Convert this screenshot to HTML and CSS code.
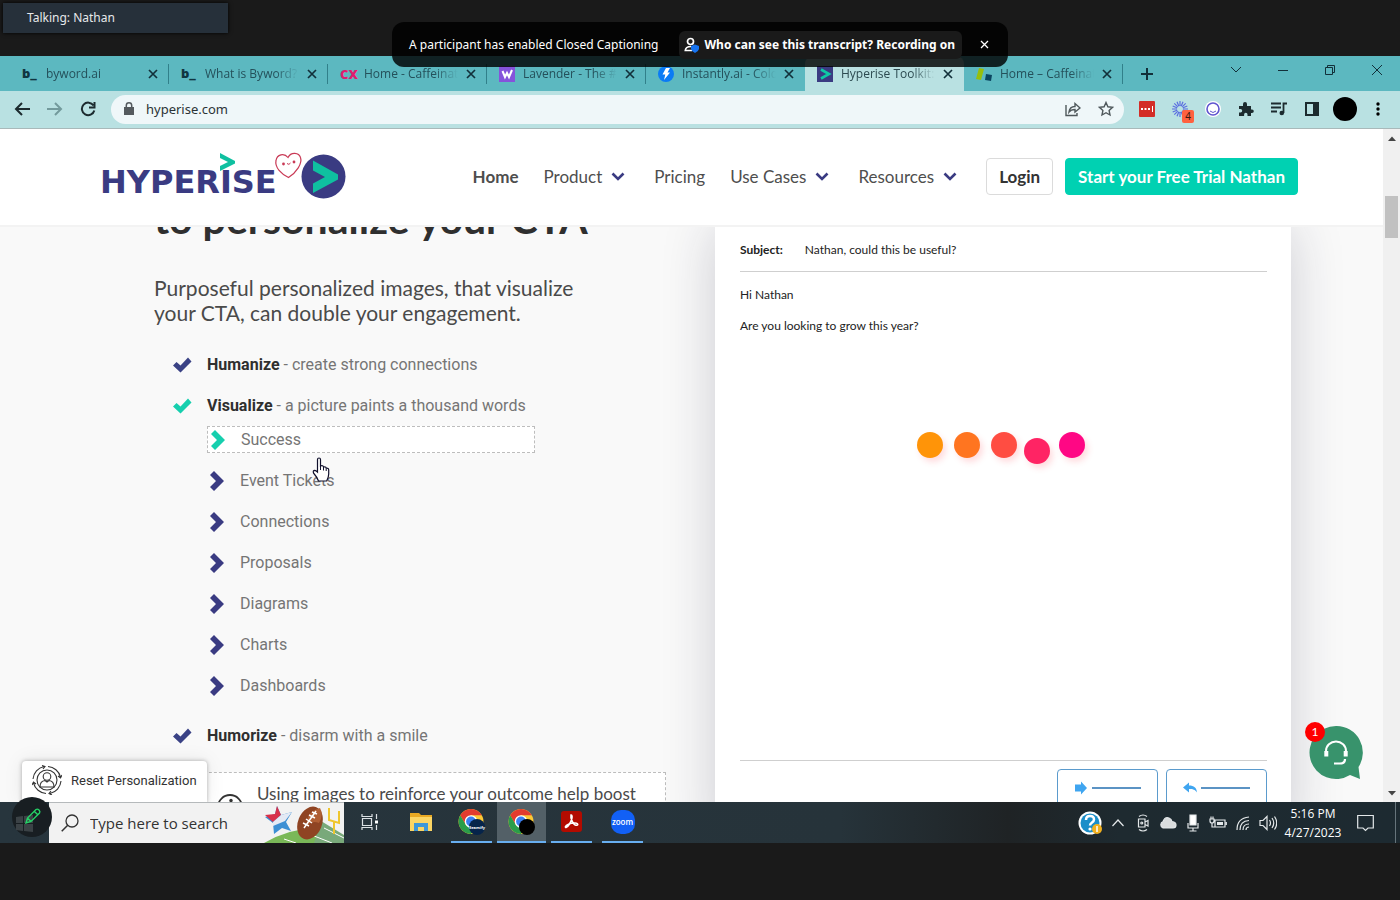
FILE: index.html
```html
<!DOCTYPE html>
<html lang="en">
<head>
  <meta charset="UTF-8">
  <meta name="viewport" content="width=device-width, initial-scale=1.0">
  <title>Hyperise Toolkit</title>
  <link rel="stylesheet" href="styles.css">
</head>
<body>

  <!-- meeting overlay -->
  <div class="meeting-bar">
    <div class="talking">Talking: Nathan</div>
  </div>
  <div class="notice">
    <span>A participant has enabled Closed Captioning</span>
    <button class="notice-link">
      <svg width="16" height="16" viewBox="0 0 16 16"><circle cx="6.500" cy="4.500" r="3" fill="none" stroke="#fff" stroke-width="1.700"/><path d="M7 9.500C3.500 9.500 1.500 11 1.300 13.500H8" fill="none" stroke="#fff" stroke-width="1.700"/><path d="M11 7.500l4 1.500v3q-.6 2.500-4 4-3.400-1.500-4-4V9z" fill="#1673f0"/></svg>
      Who can see this transcript? Recording on
    </button>
    <button class="notice-close" aria-label="Close"><svg width="9" height="9" viewBox="0 0 9 9"><path d="M1 1l7 7M8 1L1 8" stroke="#fff" stroke-width="1.300"/></svg></button>
  </div>

  <div class="browser">
    <div class="tabs">
      <div class="tab"><b class="favicon byword">b_</b><span class="tab-title">byword.ai</span><button class="tab-close" aria-label="Close tab"><svg viewBox="0 0 10 10"><path d="M1 1l8 8M9 1L1 9"/></svg></button></div>
      <div class="tab"><b class="favicon byword">b_</b><span class="tab-title">What is Byword? -</span><button class="tab-close" aria-label="Close tab"><svg viewBox="0 0 10 10"><path d="M1 1l8 8M9 1L1 9"/></svg></button></div>
      <div class="tab"><b class="favicon cx">CX</b><span class="tab-title">Home - Caffeinated</span><button class="tab-close" aria-label="Close tab"><svg viewBox="0 0 10 10"><path d="M1 1l8 8M9 1L1 9"/></svg></button></div>
      <div class="tab"><svg class="favicon" viewBox="0 0 16 16"><path d="M0 0h16v16H0z" fill="#8553db"/><path d="M3.500 5l2.500 6 2-4 2 4 3-7" fill="none" stroke="#fff" stroke-width="2"/></svg><span class="tab-title">Lavender - The #1</span><button class="tab-close" aria-label="Close tab"><svg viewBox="0 0 10 10"><path d="M1 1l8 8M9 1L1 9"/></svg></button></div>
      <div class="tab last"><svg class="favicon" viewBox="0 0 16 16"><circle cx="8" cy="8" r="8" fill="#0a7bf5"/><path d="M8 2h4L9.500 6.500H12L6 14l1.300-5.500H4.500z" fill="#fff"/></svg><span class="tab-title">Instantly.ai - Cold</span><button class="tab-close" aria-label="Close tab"><svg viewBox="0 0 10 10"><path d="M1 1l8 8M9 1L1 9"/></svg></button></div>
      <div class="tab active"><svg class="favicon" viewBox="0 0 16 16"><path d="M0 0h16v16H0z" fill="#3a3b82"/><path d="M4 3.500L12 8l-8 4.500" fill="none" stroke="#0fc9a5" stroke-width="2.600"/></svg><span class="tab-title">Hyperise Toolkit: P</span><button class="tab-close" aria-label="Close tab"><svg viewBox="0 0 10 10"><path d="M1 1l8 8M9 1L1 9"/></svg></button></div>
      <div class="tab"><svg class="favicon" viewBox="0 0 16 16"><path d="M3 2l5 1-3 11-5-1z" fill="#97bf0d"/><path d="M10 8l6 1-1 6-6-1z" fill="#0b4560"/></svg><span class="tab-title">Home – Caffeinated</span><button class="tab-close" aria-label="Close tab"><svg viewBox="0 0 10 10"><path d="M1 1l8 8M9 1L1 9"/></svg></button></div>
      <button class="new-tab" aria-label="New tab"><svg width="14" height="14" viewBox="0 0 14 14"><path d="M7 1v12M1 7h12" stroke="#12303a" stroke-width="2"/></svg></button>
      <div class="window-buttons">
        <button aria-label="Search tabs"><svg viewBox="0 0 12 12"><path d="M1 3l5 5 5-5"/></svg></button>
        <button aria-label="Minimize"><svg viewBox="0 0 12 12"><path d="M1 6.500h10"/></svg></button>
        <button aria-label="Restore"><svg viewBox="0 0 12 12"><path d="M1.500 3.500h7v7h-7zM3.500 3.500v-2h7v7h-2"/></svg></button>
        <button aria-label="Close"><svg viewBox="0 0 12 12"><path d="M1 1l10 10M11 1L1 11"/></svg></button>
      </div>
    </div>

    <div class="toolbar">
      <div class="nav-buttons">
        <button aria-label="Back"><svg viewBox="0 0 16 16"><path d="M16 8H2M8 2L2 8l6 6" stroke="#1c2b2f"/></svg></button>
        <button aria-label="Forward"><svg viewBox="0 0 16 16"><path d="M0 8h14M8 2l6 6-6 6" stroke="#739a9c"/></svg></button>
        <button aria-label="Reload"><svg viewBox="0 0 16 16"><path d="M13.500 4.500A6.300 6.300 0 1 0 14.300 9.500M14.500 1v5.500H9" stroke="#1c2b2f"/></svg></button>
      </div>
      <div class="address">
        <svg width="10" height="14" viewBox="0 0 10 14"><path d="M0 5h10v8H0z" fill="#545a5e"/><path d="M2.300 5.500V3.500a2.700 2.700 0 0 1 5.400 0v2" fill="none" stroke="#545a5e" stroke-width="1.500"/></svg>
        <input type="text" value="hyperise.com" aria-label="Address">
        <button aria-label="Share"><svg width="16" height="16" viewBox="0 0 16 16"><path d="M1 4v10.500h11V12M4 11c.5-4 3-5.500 6-5.500V2.500L15 7l-5 4V8.500c-3 0-4.500.5-6 2.500z"/></svg></button>
        <button aria-label="Bookmark"><svg width="16" height="16" viewBox="0 0 16 16"><path d="M8 1.500l1.900 4.300 4.600.5-3.400 3.100.9 4.600L8 11.700 4 14l.9-4.600L1.500 6.300l4.600-.5z"/></svg></button>
      </div>
      <div class="extensions">
        <svg viewBox="0 0 16 16"><rect width="16" height="16" rx="1" fill="#d32d27"/><path d="M2 8h2M5.500 8h2M9 8h2" stroke="#fff" stroke-width="2"/><path d="M13.500 5v6" stroke="#fff"/></svg>
        <span class="ext-badge"><svg viewBox="0 0 16 16"><path d="M8 0v16M0 8h16M2.300 2.300l11.400 11.400M13.700 2.300L2.300 13.700M5 .7l6 14.600M11 .7L5 15.300M.7 5l14.600 6M15.300 5L.7 11" stroke="#5a6de0" stroke-width="1.200"/><circle cx="8" cy="8" r="3" fill="#b9e1e2"/></svg><span class="badge">4</span></span>
        <svg viewBox="0 0 16 16"><circle cx="8" cy="8" r="8" fill="#fff"/><circle cx="8" cy="8" r="6" fill="none" stroke="#5f55cf" stroke-width="1.600"/><path d="M5 10q3 3 6 0" fill="none" stroke="#5f55cf"/></svg>
        <svg viewBox="0 0 16 16"><path d="M1 5h4V3a2 2 0 0 1 4 0v2h4v3.500h1a1.800 1.800 0 0 1 0 3.600h-1V15H9.500v-1.500a1.700 1.700 0 0 0-3.400 0V15H1v-3.500h1.500a1.700 1.700 0 0 0 0-3.400H1z" fill="#1c2b2f"/></svg>
        <svg viewBox="0 0 16 16"><path d="M0 2.500h10M0 6.500h10M0 10.500h6M12.500 12V2.500H16" fill="none" stroke="#1c2b2f" stroke-width="1.800"/><circle cx="10.800" cy="12" r="2.300" fill="#1c2b2f"/></svg>
        <svg viewBox="0 0 16 16"><path d="M2 2h12v12H2z" fill="none" stroke="#1c2b2f" stroke-width="2"/><path d="M9 2h5v12H9z" fill="#1c2b2f"/></svg>
        <span class="avatar"></span>
        <svg viewBox="0 0 16 16"><circle cx="8" cy="3" r="1.700"/><circle cx="8" cy="8" r="1.700"/><circle cx="8" cy="13" r="1.700"/></svg>
      </div>
    </div>

    <div class="viewport">
      <div class="page">
        <header class="site-header">
          <a class="logo" href="#" aria-label="Hyperise">
            <svg width="246" height="50" viewBox="0 0 246 50">
              <text x="-1" y="42" class="logo-text">HYPERISE</text>
              <path d="M119 2v5l8 4-8 4v5l15-7.500V10z" fill="#0fc0a0"/>
              <path d="M187.500 26.500c-7-3.500-14-10-12.500-17 1-6 8-8 12-3 3-6 11-5 12.500 0 2 6-4 15-12 20z" fill="#fff" stroke="#c93a56" stroke-width="1.200"/>
              <circle cx="182.500" cy="13" r="1.400" fill="#c93a56"/><circle cx="193" cy="11" r="1.400" fill="#c93a56"/><path d="M186 12.500q2 2 3.500-.5" fill="none" stroke="#c93a56"/>
              <circle cx="222.500" cy="25.500" r="22" fill="#3a3b82"/>
              <path d="M212 9.500v10l12 6.500-12 6.500v9.500l25-13.500v-5z" fill="#0fc0a0"/>
            </svg>
          </a>
          <nav class="menu">
            <a class="current" href="#">Home</a>
            <a class="drop" href="#">Product <svg viewBox="0 0 14 9"><path d="M1.500 1.500L7 7l5.500-5.500"/></svg></a>
            <a href="#">Pricing</a>
            <a class="drop" href="#">Use Cases <svg viewBox="0 0 14 9"><path d="M1.500 1.500L7 7l5.500-5.500"/></svg></a>
            <a class="drop" href="#">Resources <svg viewBox="0 0 14 9"><path d="M1.500 1.500L7 7l5.500-5.500"/></svg></a>
          </nav>
          <button class="btn login">Login</button>
          <button class="btn trial">Start your Free Trial Nathan</button>
        </header>

        <main class="hero">
          <section class="pitch">
            <h1>to personalize your CTA</h1>
            <p class="lead">Purposeful personalized images, that visualize<br>your CTA, can double your engagement.</p>
            <ul class="checks">
              <li><svg class="check" viewBox="0 0 20 16"><path d="M1 8.500L4.500 5l4 3.500L16 .5l3.500 4L8.500 15.500z"/></svg><span><b>Humanize</b> - create strong connections</span></li>
              <li class="open"><svg class="check" viewBox="0 0 20 16"><path d="M1 8.500L4.500 5l4 3.500L16 .5l3.500 4L8.500 15.500z"/></svg><span><b>Visualize</b> - a picture paints a thousand words</span></li>
            </ul>
            <ul class="topics">
              <li class="selected"><svg viewBox="0 0 14 20"><path d="M0 4l4-4 10 10L4 20l-4-4 6-6z"/></svg>Success</li>
              <li><svg viewBox="0 0 14 20"><path d="M0 4l4-4 10 10L4 20l-4-4 6-6z"/></svg>Event Tickets</li>
              <li><svg viewBox="0 0 14 20"><path d="M0 4l4-4 10 10L4 20l-4-4 6-6z"/></svg>Connections</li>
              <li><svg viewBox="0 0 14 20"><path d="M0 4l4-4 10 10L4 20l-4-4 6-6z"/></svg>Proposals</li>
              <li><svg viewBox="0 0 14 20"><path d="M0 4l4-4 10 10L4 20l-4-4 6-6z"/></svg>Diagrams</li>
              <li><svg viewBox="0 0 14 20"><path d="M0 4l4-4 10 10L4 20l-4-4 6-6z"/></svg>Charts</li>
              <li><svg viewBox="0 0 14 20"><path d="M0 4l4-4 10 10L4 20l-4-4 6-6z"/></svg>Dashboards</li>
            </ul>
            <ul class="checks">
              <li><svg class="check" viewBox="0 0 20 16"><path d="M1 8.500L4.500 5l4 3.500L16 .5l3.500 4L8.500 15.500z"/></svg><span><b>Humorize</b> - disarm with a smile</span></li>
            </ul>
            <div class="tip">
              <svg width="26" height="26" viewBox="0 0 26 26"><circle cx="13" cy="13" r="12" fill="none" stroke="#333" stroke-width="1.800"/><circle cx="14" cy="6.500" r="1.700" fill="#333"/><path d="M11 11h3v9" fill="none" stroke="#333" stroke-width="2"/></svg>
              <p>Using images to reinforce your outcome help boost</p>
            </div>
          </section>

          <section class="email">
            <div class="subject"><b>Subject:</b><span>Nathan, could this be useful?</span></div>
            <p>Hi Nathan</p>
            <p>Are you looking to grow this year?</p>
            <div class="loader">
              <i class="dot d1"></i><i class="dot d2"></i><i class="dot d3"></i><i class="dot d4"></i><i class="dot d5"></i>
            </div>
            <div class="email-actions">
              <button aria-label="Forward"><svg width="14" height="14" viewBox="0 0 14 14"><path d="M1 3.500h6V0.500L13 7l-6 6.500v-3H1z" fill="#3fa5f0"/></svg><i></i></button>
              <button aria-label="Reply"><svg width="14" height="14" viewBox="0 0 14 14"><path d="M0 6.500L6 1.500v3c5 0 7.500 2 8 7-2-3-4-3.500-8-3.500v3.500z" fill="#3fa5f0"/></svg><i></i></button>
            </div>
          </section>
        </main>

        <button class="reset">
          <svg width="30" height="30" viewBox="0 0 30 30" fill="none" stroke="#333" stroke-width="1.100"><circle cx="15" cy="15" r="10"/><circle cx="15" cy="11.500" r="3.800"/><path d="M8 22q0-6 5-6.500l2 1.500 2-1.500q5 .5 5 6.500zM1 14A14 14 0 0 1 12 1.500M10 .5l3 1-2 2.500M16 1.500A14 14 0 0 1 28.500 12M30 10l-1.500 3-2.500-2M29 16a14 14 0 0 1-11 12.500M20 30l-3-1.500 2-2.500M14 28.500A14 14 0 0 1 1.500 18M0 20l1.500-3 2.500 2"/></svg>
          Reset Personalization
        </button>
        <button class="chat" aria-label="Chat">
          <svg width="54" height="54" viewBox="0 0 54 54"><path d="M27 0a26.500 26.500 0 1 0 14 49l10 4-1.500-12A26.500 26.500 0 0 0 27 0z" fill="#38936c"/><path d="M17 27v-2a10 9.500 0 0 1 20 0v2" fill="none" stroke="#fff" stroke-width="2"/><path d="M17.300 25v5.500M36.700 25v5.500" stroke="#fff" stroke-width="4"/><path d="M36 33q0 4.500-5 4.500h-6" fill="none" stroke="#fff" stroke-width="2.200"/></svg>
          <span class="count">1</span>
        </button>
        <svg class="cursor" viewBox="0 0 18 25"><path d="M5.500 15V2.500a1.500 1.500 0 0 1 3 0V9q2.500-1 3 1 2.300-.6 2.700 1.200 2.500-.3 2.500 1.800V17q0 3-2 7H6.500Q5 20 1.500 16q-.8-2.500 1.200-2.600Q4 13.500 5.500 15z" fill="#fff" stroke="#10102c" stroke-width="1.200"/><path d="M8.500 9v4M11.500 10v3.500M14.200 11.500V14" stroke="#10102c"/></svg>
      </div>
      <div class="scrollbar">
        <svg width="8" height="5" viewBox="0 0 8 5"><path d="M0 5l4-4.500L8 5z" fill="#444"/></svg>
        <div class="thumb"></div>
        <svg width="8" height="5" viewBox="0 0 8 5"><path d="M0 0l4 4.500L8 0z" fill="#444"/></svg>
      </div>
    </div>
  </div>

  <div class="taskbar">
    <button class="start" aria-label="Start"><svg width="40" height="40" viewBox="0 0 40 40"><circle cx="20" cy="20" r="20" fill="#181e22"/><path d="M4 20l7-1v7H4zM12 19l9-1v8h-9zM4 27h7v7l-7-1zM12 27h9v8l-9-1z" fill="#3b4246"/><path d="M14 26l1.500-5L24 12.500q1.500-1 3 .5t.5 3L19 24.500zM22 14l4 4M15.500 21l3.500 3.500" fill="none" stroke="#25d366" stroke-width="1.400"/></svg></button>
    <label class="search">
      <svg width="18" height="18" viewBox="0 0 18 18"><circle cx="11" cy="7" r="6" fill="none" stroke="#333" stroke-width="1.300"/><path d="M6.700 11.300L.7 17.300" stroke="#333" stroke-width="1.500"/></svg>
      <input type="text" placeholder="Type here to search" aria-label="Search">
      <svg class="search-art" width="80" height="37" viewBox="0 0 80 37">
        <path d="M0 37Q30 20 58 23l22 10v4z" fill="#7ab858"/><path d="M57 15l23 14v8H50z" fill="#79a97a"/><path d="M20 33l12 4M40 26l28 11M60 22l20 10" stroke="#fff"/>
        <path d="M13 0l4 9 11-3-6 10 5 9-9-3-8 6-1-11-8-6 10-3z" fill="#3c8fd4"/><path d="M13 0l4 9-8 7-8-7 10-1z" fill="#d8304a"/><path d="M17 9l11-3-7 9-12 5v-4z" fill="#e4e9f4"/>
        <ellipse cx="46" cy="17" rx="12" ry="17" transform="rotate(22 46 17)" fill="#8f4423"/><path d="M43 19Q42 6 56 2q4 7-1 15-6-3-12 2" fill="#b05f34"/><path d="M40 22L52 5M39 17l6 3M42 13l6 4M45 9l6 3M48 6l5 2" stroke="#fff" stroke-width="1.500"/>
        <path d="M65 2v12l10 3V5M70 16v12" fill="none" stroke="#efc62e" stroke-width="2"/>
      </svg>
    </label>
    <div class="apps">
      <button aria-label="Task View"><svg width="18" height="18" viewBox="0 0 18 18" fill="none" stroke="#dce2e5" stroke-width="1.200"><path d="M1 1v2.500h10V1M1 17v-2.500h10V17M1.500 5.500h9v7h-9zM15.500 1v5M15.500 12v5"/><path d="M14 7.500h3v3h-3z" fill="#fff" stroke="none"/></svg></button>
      <button aria-label="File Explorer"><svg width="24" height="20" viewBox="0 0 24 20"><path d="M1 1h9l2 2h11v16H1z" fill="#e9a923"/><path d="M1 5h22v14H1z" fill="#fbd564"/><path d="M5 11h14v8h-4v-4h-6v4H5z" fill="#3d97d8"/></svg></button>
      <button class="running" aria-label="Chrome"><svg width="28" height="26" viewBox="0 0 28 26"><circle cx="13" cy="12.500" r="12.500" fill="#fcc934"/><path d="M2.200 6.300a12.500 12.500 0 0 1 21.600 0H13l-5.400 9.400z" fill="#e33b2e"/><path d="M2.200 6.300A12.500 12.500 0 0 0 13 25l5.400-9.400H7.600z" fill="#2a9d4a"/><circle cx="13" cy="12.500" r="6.300" fill="#fff"/><circle cx="13" cy="12.500" r="4.900" fill="#3b7ff0"/><circle cx="19" cy="18" r="8" fill="#06244a"/><text x="19" y="20" text-anchor="middle" class="profile-text">Seamify</text></svg></button>
      <button class="running current" aria-label="Chrome profile"><svg width="28" height="26" viewBox="0 0 28 26"><circle cx="13" cy="12.500" r="12.500" fill="#fcc934"/><path d="M2.200 6.300a12.500 12.500 0 0 1 21.600 0H13l-5.400 9.400z" fill="#e33b2e"/><path d="M2.200 6.300A12.500 12.500 0 0 0 13 25l5.400-9.400H7.600z" fill="#2a9d4a"/><circle cx="13" cy="12.500" r="6.300" fill="#fff"/><circle cx="13" cy="12.500" r="4.900" fill="#3b7ff0"/><circle cx="19" cy="18" r="8" fill="#000"/></svg></button>
      <button class="running" aria-label="Acrobat"><svg width="21" height="21" viewBox="0 0 21 21"><rect width="21" height="21" rx="3" fill="#b30b00"/><path d="M10 4c2 0 1 5-1.500 9S4 17 4.500 15.500 10 11.500 14 12s3 2.500 1 2.300S9 8 10 4z" fill="none" stroke="#fff" stroke-width="1.600"/></svg></button>
      <button class="running" aria-label="Zoom"><span class="zoom-icon">zoom</span></button>
    </div>
    <div class="tray">
      <svg viewBox="0 0 24 24" class="help"><circle cx="12" cy="12" r="11.500" fill="#fff"/><circle cx="12" cy="12" r="9.500" fill="#1b8ec9"/><path d="M8 9q0-4 4-4t4 3.500c0 3-4 3-4 6" fill="none" stroke="#fff" stroke-width="2.500"/><circle cx="12" cy="18" r="1.600" fill="#fff"/><circle cx="19" cy="18" r="5" fill="#f2b01e"/><path d="M19 15v6" stroke="#fff" stroke-width="1.500"/></svg>
      <svg viewBox="0 0 18 18"><path d="M3.500 12L9 6l5.500 6"/></svg>
      <svg viewBox="0 0 18 18"><path d="M4.500 5h6.500v8H4.500zM11 8l3-1.500v5.500L11 10.500M5 2.500Q9 -.5 13 2.500M5 15.500q4 3 8 0"/><circle cx="7.800" cy="9" r="1"/></svg>
      <svg viewBox="0 0 18 18"><path d="M4 14a3.500 3.500 0 0 1 0-6.500Q6 2.500 10 4q2.500 1 3 3.500 4 .5 4 3.500t-3 3z" fill="#d9dcdd"/></svg>
      <svg viewBox="0 0 18 18"><path d="M6 1h6v10H6z" fill="#fff"/><path d="M4 9v5h10V9M9 14v3M5.500 17h7"/></svg>
      <svg viewBox="0 0 18 18"><path d="M6 6h10v7H6zM1 5v2q0 2 2 2t2-2V5zM2 5V2.500M4 5V2.500M3 9v4h3M17.300 8v3"/><path d="M8 8h6v3H8z" fill="#e4e8ea" stroke="none"/></svg>
      <svg viewBox="0 0 18 18"><path d="M3 16Q3 4 15 3M6 16Q6 7 15 6.500M9 16q0-6 6-6M12 16q0-3 3-3"/></svg>
      <svg viewBox="0 0 18 18"><path d="M1 6.500h3l4-4v13l-4-4H1zM10.500 6q2 3 0 6M13 4q3.500 5 0 10M15.500 2.500q4.500 6.500 0 13"/></svg>
    </div>
    <div class="clock">5:16 PM<br>4/27/2023</div>
    <button class="action-center" aria-label="Notifications"><svg width="17" height="18" viewBox="0 0 17 18"><path d="M.7 1.500h15.600v12.500H11L8.500 16.500 6 14H.7z" fill="none" stroke="#e4e8ea" stroke-width="1.200"/></svg></button>
  </div>

</body>
</html>
```
FILE: styles.css
```css
* { box-sizing: border-box; }
body { margin: 0; height: 100vh; padding-bottom: 57px; display: flex; flex-direction: column; background: #1a1a1a; font-family: "Noto Sans", sans-serif; font-size: 12px; overflow: hidden; position: relative; }
button { border: 0; padding: 0; background: none; font: inherit; color: inherit; cursor: pointer; }
input { border: 0; padding: 0; background: none; font: inherit; outline: none; min-width: 0; }
ul { list-style: none; margin: 0; padding: 0; }
a { color: inherit; text-decoration: none; }
svg { display: block; flex: none; }

/* meeting overlay */
.meeting-bar { height: 56px; flex: none; padding: 3px; }
.talking { width: 225px; height: 30px; padding-left: 24px; line-height: 30px; background: #26303a; color: #e6e8ea; box-shadow: 0 0 4px #000; }
.notice { position: absolute; z-index: 5; top: 22px; left: 50%; transform: translateX(-50%); width: 616px; height: 45px; padding: 0 17px; display: flex; align-items: center; border-radius: 12px; background: rgba(0, 0, 0, 0.82); color: #fff; white-space: nowrap; }
.notice-link { display: flex; align-items: center; gap: 5px; height: 28px; margin-left: auto; padding: 0 7px 0 5px; border-radius: 6px; background: #1a1a1a; font-weight: bold; }
.notice-close { margin: 0 2px 0 18px; }

/* browser */
.browser { flex: 1; min-height: 0; display: flex; flex-direction: column; }
.tabs { flex: none; height: 35px; padding-left: 10px; display: flex; background: #5cb8c0; color: #24505a; font-family: "Open Sans", sans-serif; }
.tab { position: relative; flex: 0 1 159px; min-width: 0; display: flex; align-items: center; gap: 8px; padding: 0 11px 0 12px; }
.tab::after { content: ""; position: absolute; right: 0; top: 8px; height: 20px; border-right: 1px solid #31808a; }
.tab.active::after, .tab.last::after { display: none; }
.tab.active { background: #b9e1e2; border-radius: 8px 8px 0 0; color: #2c4a50; }
.favicon { width: 16px; height: 16px; flex: none; }
.byword { color: #0f3540; font-size: 13px; line-height: 14px; font-weight: 800; }
.cx { color: #e01b6e; font-size: 13px; line-height: 16px; font-weight: 800; }
.tab-title { flex: 1; overflow: hidden; white-space: nowrap; mask-image: linear-gradient(to right, #000 75%, transparent); }
.tab-close svg { width: 10px; height: 10px; }
.tab-close path { stroke: #12303a; stroke-width: 1.7; }
.new-tab { margin-left: 17px; }
.window-buttons { margin-left: auto; display: flex; height: 28px; }
.window-buttons button { width: 47px; display: grid; place-items: center; }
.window-buttons svg { width: 12px; height: 12px; }
.window-buttons path { fill: none; stroke: #12303a; }

.toolbar { flex: none; height: 38px; display: flex; align-items: center; padding: 0 14px 1px; background: #b9e1e2; border-bottom: 1px solid #a9b9ba; }
.nav-buttons { display: flex; gap: 17px; padding-right: 15px; }
.nav-buttons svg { width: 16px; height: 16px; }
.nav-buttons path { fill: none; stroke-width: 2; }
.address { flex: 1; height: 29px; display: flex; align-items: center; gap: 12px; padding: 0 10px 0 13px; border-radius: 15px; background: #eff7f9; }
.address input { flex: 1; font-size: 13px; color: #2b3336; }
.address button { margin-left: 5px; }
.address button path { fill: none; stroke: #4f585b; stroke-width: 1.4; }
.extensions { display: flex; align-items: center; gap: 17px; padding-left: 15px; }
.extensions svg { width: 16px; height: 16px; }
.ext-badge { position: relative; }
.badge { position: absolute; left: 10px; top: 9px; width: 12px; height: 13px; border-radius: 2px; background: #ff6140; color: #3c1a10; font-size: 10px; line-height: 13px; text-align: center; }
.avatar { width: 24px; height: 24px; margin: 0 -4px; border-radius: 50%; background: #000; }

.viewport { flex: 1; min-height: 0; display: flex; }
.page { position: relative; flex: 1; overflow: hidden; background: #f9f9f9; font-family: Lato, sans-serif; color: #333; }
.scrollbar { width: 17px; display: flex; flex-direction: column; align-items: center; padding: 7px 0 6px; background: #f0f0f0; }
.thumb { width: 13px; height: 42px; margin: 55px 0 auto; background: #c1c1c1; }

/* site header */
.site-header { position: relative; z-index: 2; height: 98px; display: flex; align-items: center; padding: 0 85px 2px 101px; background: #fff; border-bottom: 2px solid #f3f3f3; font-size: 17px; white-space: nowrap; }
.logo-text { font: bold 32px "DejaVu Sans", sans-serif; fill: #3a3b82; }
.menu { display: flex; gap: 25px; margin: 0 25px 0 auto; color: #4e4e4e; }
.menu a { display: flex; align-items: center; gap: 9px; }
.menu .current { font-weight: bold; }
.menu .drop { margin-right: 4px; }
.menu svg { width: 14px; height: 9px; }
.menu path { fill: none; stroke: #3a3b82; stroke-width: 2.6; }
.btn { height: 37px; padding: 0 12px; border: 1px solid #dbdbdb; border-radius: 4px; background: #fff; font-weight: bold; }
.trial { margin-left: 12px; border-color: #00d1b2; background: #00d1b2; color: #fff; }

/* hero */
.hero { display: grid; grid-template-columns: 8fr 9fr; gap: 49px; padding: 0 92px 0 154px; }
.pitch { margin-top: -32px; }
h1 { margin: 0 0 32px; font-size: 41px; line-height: 48px; color: #2f2f2f; white-space: nowrap; }
.lead { margin: 0 0 19px; font-size: 21px; line-height: 25px; color: #4a4a4a; white-space: nowrap; }
.checks, .topics { font-family: Roboto, sans-serif; font-size: 16px; color: #757575; white-space: nowrap; }
.checks { padding-left: 18px; }
.checks li { display: flex; align-items: center; gap: 15px; height: 41px; }
.checks b { color: #2f2f2f; }
.check { width: 20px; height: 16px; fill: #3a4285; }
.open .check { fill: #16cfae; }
.topics { margin-left: 53px; padding-bottom: 9px; }
.topics li { display: flex; align-items: center; gap: 16px; height: 41px; padding-left: 3px; }
.topics svg { width: 14px; height: 20px; fill: #3a3b82; }
.topics .selected { width: 328px; height: 27px; margin-bottom: 7px; border: 1px dashed #bdbdbd; background: #fff; }
.topics .selected svg { fill: #16cfae; }
.tip { display: flex; gap: 14px; margin-top: 16px; padding: 11px 20px 20px 62px; border: 1px dashed #bdbdbd; background: #fff; }
.tip svg { margin-top: 10px; }
.tip p { margin: 0; font-size: 17px; line-height: 20px; color: #4a4a4a; white-space: nowrap; }

.email { padding: 0 24px 0 25px; background: #fff; box-shadow: 0 0 50px rgba(30, 30, 60, 0.2); font-size: 12px; color: #222; display: flex; flex-direction: column; }
.subject { display: flex; gap: 22px; height: 45px; line-height: 46px; border-bottom: 1px solid #cfcfcf; }
.email p { margin: 15px 0 0; line-height: 16px; }
.loader { display: flex; justify-content: center; gap: 11px; padding: 98px 6px 0 0; }
.dot { width: 26px; height: 26px; border-radius: 50%; box-shadow: 3px 4px 6px rgba(255, 60, 80, 0.18); }
.d1 { background: #ff9408; }
.d2 { background: #ff7520; }
.d3 { background: #ff4d42; }
.d4 { background: #ff2464; margin: 6px -2px 0 -4px; }
.d5 { background: #ff0784; }
.email-actions { margin-top: 296px; padding-top: 8px; display: flex; justify-content: flex-end; gap: 8px; border-top: 1px solid #cfcfcf; }
.email-actions button { width: 101px; height: 38px; display: flex; align-items: center; justify-content: center; gap: 4px; border: 1px solid #5b9bcd; border-radius: 4px; }
.email-actions i { width: 49px; height: 2px; background: #5b93c4; }

/* floating items */
.reset { position: absolute; z-index: 3; left: 22px; bottom: -1px; height: 42px; padding: 0 10px 4px; display: flex; align-items: center; gap: 9px; border-radius: 4px 4px 0 0; background: #fff; box-shadow: 0 0 4px rgba(0, 0, 0, 0.3), 0 0 20px rgba(0, 0, 0, 0.08); font-family: Roboto, sans-serif; font-size: 13px; }
.chat { position: absolute; right: 20px; bottom: 22px; }
.count { position: absolute; left: -4px; top: -4px; width: 20px; height: 20px; border-radius: 50%; background: #f00; color: #fff; font-size: 12px; line-height: 20px; }
.cursor { position: absolute; left: 312px; top: 328px; width: 18px; height: 25px; }

/* taskbar */
.taskbar { flex: none; height: 41px; display: flex; align-items: center; background: linear-gradient(to right, #27353d 0%, #26333a 60%, #1f2325 72%, #1e2a30 80%, #1d2a31 100%); color: #fff; font-family: "Open Sans", sans-serif; }
.start { position: relative; z-index: 4; width: 49px; height: 41px; padding-left: 12px; }
.start svg { margin-top: -12px; }
.search { width: 295px; align-self: stretch; display: flex; align-items: center; padding-left: 12px; background: #f2f2f2; border-top: 1px solid #b5b9bb; }
.search input { flex: 1; padding-left: 11px; font-size: 15px; color: #333; }
.search input::placeholder { color: #333; opacity: 1; }
.search-art { align-self: flex-end; }
.apps { align-self: stretch; display: flex; gap: 10px; padding-left: 5px; }
.apps button { width: 41px; display: grid; place-items: center; border-bottom: 2px solid transparent; }
.apps .running { border-color: #68aef0; }
.apps .current { width: 49px; margin: 0 -5px; background: #536067; }
.profile-text { font: bold 4px "Open Sans", sans-serif; fill: #fff; }
.zoom-icon { width: 24px; height: 24px; border-radius: 10px; background: #1260f5; font-size: 8px; line-height: 23px; font-weight: 600; }
.tray { margin-left: auto; display: flex; align-items: center; gap: 7px; }
.tray svg { width: 18px; height: 18px; fill: none; stroke: #e4e8ea; stroke-width: 1.2; }
.tray .help { width: 24px; height: 24px; stroke: none; }
.clock { width: 72px; text-align: center; line-height: 19px; }
.action-center { width: 47px; align-self: stretch; margin-right: 4px; padding-right: 13px; display: grid; place-items: center; border-right: 1px solid #66747b; }
```
